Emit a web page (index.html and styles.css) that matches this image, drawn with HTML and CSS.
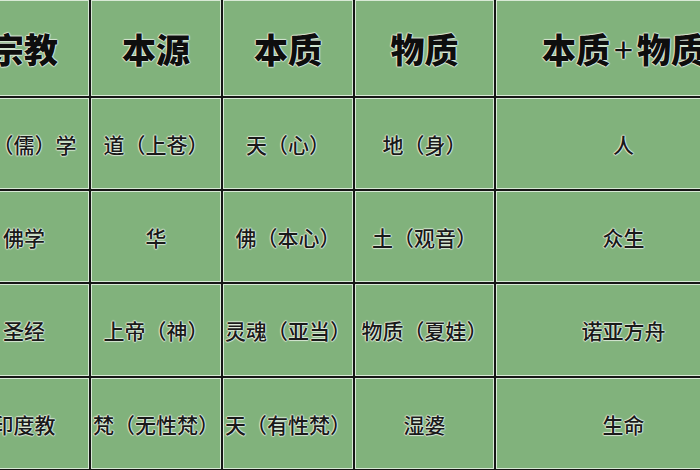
FILE: index.html
```html
<!DOCTYPE html>
<html lang="zh-CN">
<head>
<meta charset="utf-8">
<title>宗教 本源 本质 物质</title>
<link rel="stylesheet" href="styles.css">
</head>
<body>
<div class="table">
  <div class="cell head">宗教</div>
  <div class="cell head">本源</div>
  <div class="cell head">本质</div>
  <div class="cell head">物质</div>
  <div class="cell head">本质<span class="plus">+</span>物质</div>

  <div class="cell">国（儒）学</div>
  <div class="cell">道（上苍）</div>
  <div class="cell">天（心）</div>
  <div class="cell">地（身）</div>
  <div class="cell">人</div>

  <div class="cell">佛学</div>
  <div class="cell">华</div>
  <div class="cell">佛（本心）</div>
  <div class="cell">土（观音）</div>
  <div class="cell">众生</div>

  <div class="cell">圣经</div>
  <div class="cell">上帝（神）</div>
  <div class="cell">灵魂（亚当）</div>
  <div class="cell">物质（夏娃）</div>
  <div class="cell">诺亚方舟</div>

  <div class="cell">印度教</div>
  <div class="cell">梵（无性梵）</div>
  <div class="cell">天（有性梵）</div>
  <div class="cell">湿婆</div>
  <div class="cell">生命</div>
</div>
</body>
</html>
```

FILE: styles.css
```css
html, body {
  margin: 0;
  padding: 0;
  background: #81b27c;
  overflow: hidden;
}

.table {
  display: grid;
  grid-template-columns: 130px 130px 130px 139px 255px;
  grid-template-rows: 96px 91px 91px 92px 91px;
  gap: 2px;
  padding-bottom: 2px;
  margin-left: -41px;
  width: max-content;
  background: #161616;
  font-family: "Noto Sans CJK SC", "Noto Sans", sans-serif;
}

.cell {
  background: #81b27c;
  box-shadow: inset 0 0 0 1px rgba(232, 242, 230, 0.85);
  display: flex;
  align-items: center;
  justify-content: center;
  white-space: nowrap;
  font-size: 21px;
  font-weight: 500;
  color: #1a1a1a;
  text-shadow: 1px 0 1px rgba(240, 245, 238, 0.75), -1px 0 1px rgba(240, 245, 238, 0.75),
               0 1px 1px rgba(240, 245, 238, 0.75), 0 -1px 1px rgba(240, 245, 238, 0.75);
}

.head {
  font-size: 34px;
  font-weight: 900;
  color: #0e0e0e;
}

.plus {
  font-weight: 400;
  padding: 0 4px;
}
```
